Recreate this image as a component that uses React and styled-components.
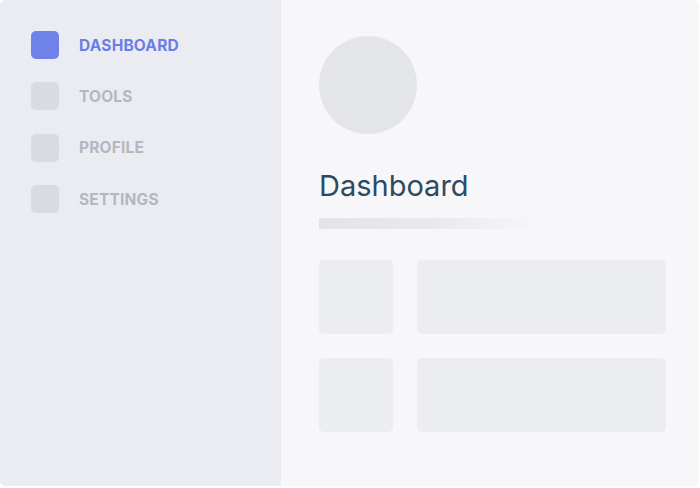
import React from 'react';
import styled, { createGlobalStyle } from 'styled-components';

const GlobalStyle = createGlobalStyle`
  html, body {
    margin: 0;
    padding: 0;
    background: #ffffff;
  }
  body {
    font-family: "Inter", "Liberation Sans", sans-serif;
  }
`;

const navItems = [
  { label: 'DASHBOARD', active: true },
  { label: 'TOOLS' },
  { label: 'PROFILE' },
  { label: 'SETTINGS' },
];

const App = () => {
  return (
    <>
      <GlobalStyle />
      <Card>
        <Sidebar>
          <NavList>
            {navItems.map((item) => (
              <NavItem key={item.label}>
                <NavIcon $active={item.active} />
                <NavLabel $active={item.active}>{item.label}</NavLabel>
              </NavItem>
            ))}
          </NavList>
        </Sidebar>
        <Main>
          <Avatar />
          <Title>Dashboard</Title>
          <TitleBar />
          <BlockGrid>
            <Block />
            <Block />
            <Block />
            <Block />
          </BlockGrid>
        </Main>
      </Card>
    </>
  );
};

export default App;

const Card = styled.div`
  display: flex;
  width: 699px;
  height: 486px;
  border-radius: 5px;
  overflow: hidden;
`;

const Sidebar = styled.aside`
  width: 281px;
  flex-shrink: 0;
  background: #ebecf1;
  padding: 31px 0 0 31px;
  box-sizing: border-box;
`;

const NavList = styled.ul`
  list-style: none;
  margin: 0;
  padding: 0;
  display: flex;
  flex-direction: column;
  gap: 23.4px;
`;

const NavItem = styled.li`
  display: flex;
  align-items: center;
  gap: 20px;
  height: 28px;
`;

const NavIcon = styled.span`
  width: 28px;
  height: 28px;
  border-radius: 5px;
  background: ${(p) => (p.$active ? '#6f82ea' : '#d9dbe1')};
`;

const NavLabel = styled.span`
  font-size: 15.5px;
  font-weight: 700;
  letter-spacing: 0.2px;
  color: ${(p) => (p.$active ? '#6a7ee6' : '#b3b7c1')};
`;

const Main = styled.main`
  flex: 1;
  background: #f7f7f9;
  padding: 36px 0 0 38px;
  box-sizing: border-box;
  display: flex;
  flex-direction: column;
  align-items: flex-start;
`;

const Avatar = styled.div`
  width: 98px;
  height: 98px;
  border-radius: 50%;
  background: #e4e5e9;
`;

const Title = styled.h1`
  margin: 35px 0 0;
  font-size: 29px;
  line-height: 34px;
  font-weight: 400;
  color: #2e4a5f;
`;

const TitleBar = styled.div`
  margin-top: 15px;
  width: 220px;
  height: 11px;
  background: linear-gradient(90deg, #e3e4e8 0%, #e8e9ec 50%, rgba(247, 247, 249, 0) 100%);
`;

const BlockGrid = styled.div`
  margin-top: 31px;
  display: grid;
  grid-template-columns: 74px 249px;
  grid-auto-rows: 74px;
  gap: 24px;
`;

const Block = styled.div`
  border-radius: 5px;
  background: #ecedf0;
`;
